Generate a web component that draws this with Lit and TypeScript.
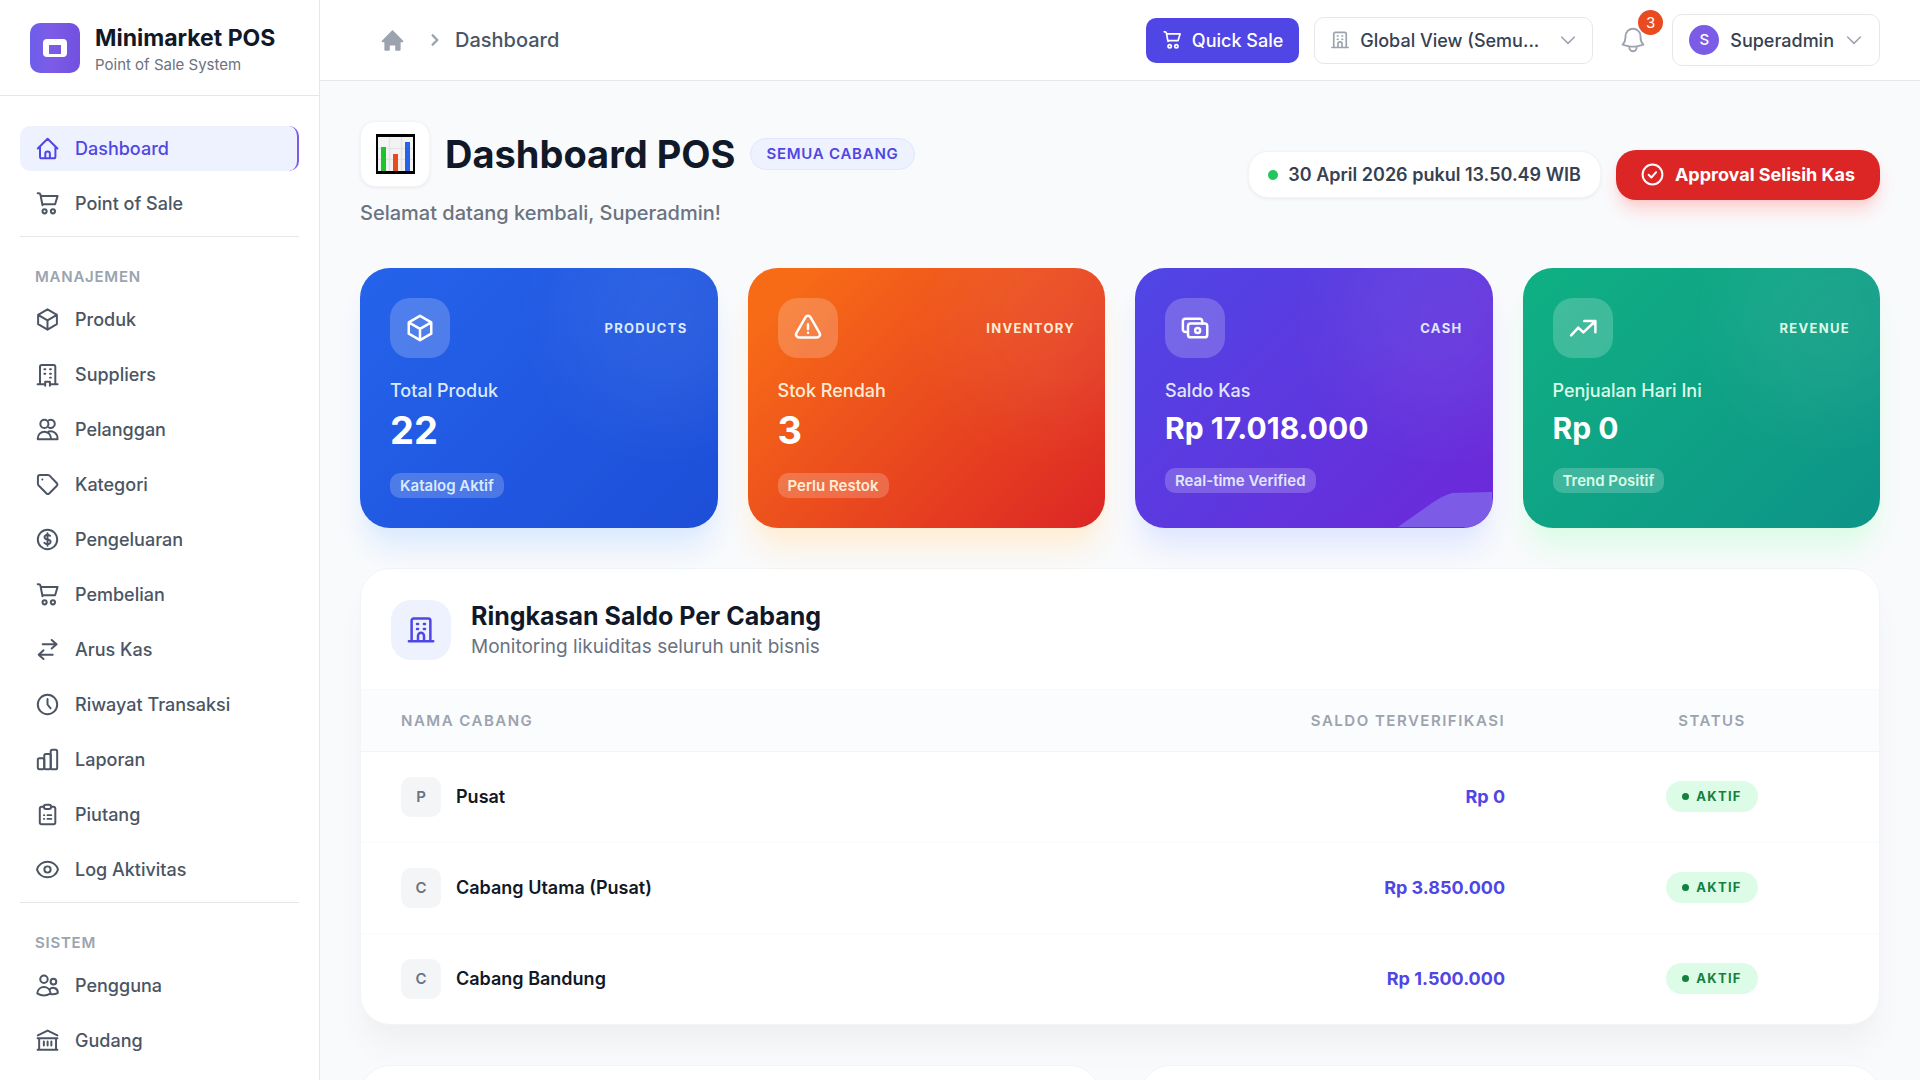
import { LitElement, html, svg, css, type SVGTemplateResult } from "lit";
import { customElement } from "lit/decorators.js";
import { classMap } from "lit/directives/class-map.js";

const shapes: Record<string, SVGTemplateResult> = {
  home: svg`<path d="M2.7 12 12.1 2.7 21.5 12M4.8 10.4v9.4c0 .9.6 1.5 1.5 1.5h11.8c.9 0 1.5-.6 1.5-1.5v-9.4M9.9 21v-3.9a2.2 2.2 0 0 1 4.4 0V21"/>`,
  cart: svg`<path d="M2.6 2.2h1.1c.8 0 1.3.4 1.5 1.2l2 10.3M5.4 4.7h16.3l-2.4 8H7"/><circle cx="9.2" cy="19.5" r="2"/><circle cx="17.2" cy="19.5" r="2"/>`,
  box: svg`<path d="m21 7.5-9-5.25L3 7.5m18 0-9 5.25m9-5.25v9l-9 5.25M3 7.5l9 5.25M3 7.5v9l9 5.25m0-9v9"/>`,
  supplier: svg`<path d="M4.8 21.3V4.6c0-1 .7-1.7 1.7-1.7h11.3c1 0 1.7.7 1.7 1.7v16.7M2.5 21.4h7.3v-2.5h4.5v2.5h7.4M9.8 21v1.8M14.3 21v1.8M9 7h.9M14.4 7h.9M9 11.2h.9M14.4 11.2h.9M14.4 15h.9"/>`,
  people: svg`<circle cx="9" cy="6.6" r="3.9"/><path d="M13.4 3.1a3.9 3.9 0 1 1 0 7M2.7 21.4v-1a6.3 6.3 0 0 1 12.6 0v1zM13.2 13.9c4.6-.9 8.4 1.8 8.4 6.5v1h-6"/>`,
  tag: svg`<path d="M5 2.8h7.3c.7 0 1.2.2 1.7.7l7 7.3c.7.8.7 1.7 0 2.4l-7.4 7.4c-.8.7-1.7.7-2.5 0l-7.6-7.6a2.4 2.4 0 0 1-.7-1.7V5c0-1.3.9-2.2 2.2-2.2z"/><path d="M7 7.2h.1"/>`,
  dollar: svg`<path d="M12 6v12m-3-2.818.879.659c1.171.879 3.070.879 4.242 0 1.172-.879 1.172-2.303 0-3.182C13.536 12.219 12.768 12 12 12c-.725 0-1.450-.220-2.003-.659-1.106-.879-1.106-2.303 0-3.182s2.900-.879 4.006 0l.415.330"/><circle cx="12" cy="12" r="9.3"/>`,
  swap: svg`<path d="M7.4 7h13.2M16 2.9 20.7 7 16 11.1M17 17H3.6M8.2 12.8 3.5 17l4.7 4.1"/>`,
  clock: svg`<circle cx="12" cy="12" r="9.3"/><path d="M12 6.8V12l3 3.7"/>`,
  bars: svg`<rect x="2.7" y="10.7" width="6.2" height="10.6" rx="1.5"/><rect x="8.9" y="6.7" width="6.2" height="14.6" rx="1.5"/><rect x="15.1" y="2.7" width="6.2" height="18.6" rx="1.5"/>`,
  clipboard: svg`<path d="M8.6 4.5H6.3c-1 0-1.7.7-1.7 1.7v13.5c0 1 .7 1.7 1.7 1.7h11.5c1 0 1.7-.7 1.7-1.7V6.2c0-1-.7-1.7-1.7-1.7h-2.4"/><rect x="8.6" y="2.7" width="6.8" height="4" rx="1.8"/><path d="M8.6 12.6h.2M12 12.6h3.6M8.6 16.2h.2M12 16.2h3.6"/>`,
  eye: svg`<path d="M2.036 12.322a1.012 1.012 0 0 1 0-.639C3.423 7.510 7.360 4.500 12 4.500c4.638 0 8.573 3.007 9.963 7.178.070.207.070.431 0 .639C20.577 16.490 16.640 19.500 12 19.500c-4.638 0-8.573-3.007-9.963-7.178Z"/><circle cx="12" cy="12" r="3"/>`,
  team: svg`<circle cx="8.6" cy="6" r="3.6"/><circle cx="17.7" cy="8.3" r="2.7"/><path d="M2.2 19.2a6.4 6.6 0 0 1 12.7 0c0 .5 0 .6-.2.7-3.9 2.2-8.5 2.2-12.3 0-.2-.1-.2-.3-.2-.7zM14.9 20.2c2.5.5 4.7.1 6.9-.9a4.4 4.4 0 0 0-7.7-3.5"/>`,
  library: svg`<path d="M2.7 7.1 12.1 2.5l9.4 4.6M2.5 9.8h19M4 9.8v10.7M20.2 9.8v10.7M2.5 20.8h19M8.5 13v3.8M12.1 13v3.8M15.7 13v3.8"/>`,
  building: svg`<path d="M2.3 21h19.5M4.5 21V4.5c0-1 .7-1.7 1.7-1.7h11.6c1 0 1.7.7 1.7 1.7V21M9.6 21v-4.4a2.4 2.4 0 0 1 4.8 0V21M8.8 7.2h.9M14.3 7.2h.9M8.8 11.2h.9M14.3 11.2h.9"/>`,
  bell: svg`<path d="M14.857 17.082a23.848 23.848 0 0 0 5.454-1.310A8.967 8.967 0 0 1 18 9.750V9A6 6 0 0 0 6 9v.750a8.967 8.967 0 0 1-2.312 6.022c1.733.640 3.560 1.085 5.455 1.310m5.714 0a24.255 24.255 0 0 1-5.714 0m5.714 0a3 3 0 1 1-5.714 0"/>`,
  down: svg`<path d="m3.5 8 8.5 8.5L20.5 8"/>`,
  right: svg`<path d="m8 4 8 8-8 8"/>`,
  check: svg`<circle cx="12" cy="12" r="9.5"/><path d="m8.3 12.2 2.6 2.7 4.6-5.1"/>`,
  warning: svg`<path d="M12 9v3.750m-9.303 3.376c-.866 1.500.217 3.374 1.948 3.374h14.710c1.730 0 2.813-1.874 1.948-3.374L13.949 3.378c-.866-1.500-3.032-1.500-3.898 0L2.697 16.126ZM12 15.750h.007v.008H12v-.008Z"/>`,
  cash: svg`<path d="M6.4 15.2H4.4c-1.200 0-2.100-.9-2.100-2.100V6.700c0-1.200.9-2.100 2.100-2.100h11.300c1.200 0 2.100.9 2.100 2.100v1.600"/><rect x="6.4" y="8.4" width="15.4" height="11" rx="2.1"/><circle cx="14.1" cy="13.9" r="2"/>`,
  trend: svg`<path d="m2.5 17.9 5.700-6.200 4.100 3.800 9.200-8.700M13 6.400h8.900v9"/>`,
};

const icon = (name: string, extra = "") =>
  html`<svg class="icon ${extra}" viewBox="0 0 24 24" aria-hidden="true">${shapes[name]}</svg>`;

interface NavItem { label: string; icon: string; active?: boolean }
const navGroups: { title?: string; items: NavItem[] }[] = [
  { items: [
    { label: "Dashboard", icon: "home", active: true },
    { label: "Point of Sale", icon: "cart" },
  ] },
  { title: "MANAJEMEN", items: [
    { label: "Produk", icon: "box" },
    { label: "Suppliers", icon: "supplier" },
    { label: "Pelanggan", icon: "people" },
    { label: "Kategori", icon: "tag" },
    { label: "Pengeluaran", icon: "dollar" },
    { label: "Pembelian", icon: "cart" },
    { label: "Arus Kas", icon: "swap" },
    { label: "Riwayat Transaksi", icon: "clock" },
    { label: "Laporan", icon: "bars" },
    { label: "Piutang", icon: "clipboard" },
    { label: "Log Aktivitas", icon: "eye" },
  ] },
  { title: "SISTEM", items: [
    { label: "Pengguna", icon: "team" },
    { label: "Gudang", icon: "library" },
  ] },
];

const stats = [
  { tone: "blue", icon: "box", tag: "PRODUCTS", label: "Total Produk", value: "22", note: "Katalog Aktif", money: false },
  { tone: "orange", icon: "warning", tag: "INVENTORY", label: "Stok Rendah", value: "3", note: "Perlu Restok", money: false },
  { tone: "violet", icon: "cash", tag: "CASH", label: "Saldo Kas", value: "Rp 17.018.000", note: "Real-time Verified", money: true },
  { tone: "green", icon: "trend", tag: "REVENUE", label: "Penjualan Hari Ini", value: "Rp 0", note: "Trend Positif", money: true },
];

const branches = [
  { name: "Pusat", balance: "Rp 0" },
  { name: "Cabang Utama (Pusat)", balance: "Rp 3.850.000" },
  { name: "Cabang Bandung", balance: "Rp 1.500.000" },
];

@customElement("app-sidebar")
export class AppSidebar extends LitElement {
  static styles = css`
    :host { display: block; box-sizing: border-box; width: 320px; flex: none; background: #fff; border-right: 1px solid #e5e7eb; }
    .brand { display: flex; align-items: center; gap: 15px; height: 95px; padding: 0 30px; border-bottom: 1px solid #e5e7eb; }
    .logo { width: 50px; height: 50px; border-radius: 10px; background: linear-gradient(90deg, #6d5eea, #7c5ce7 40%, #7350e0); display: grid; place-items: center; flex: none; }
    .logo-mark { width: 12px; height: 9px; border: 6px solid #fff; border-bottom-width: 3px; border-radius: 4px; }
    .brand-text { padding-top: 6px; }
    .name { margin: 0; font-size: 23px; line-height: 28px; font-weight: 700; color: #111827; white-space: nowrap; }
    .tagline { margin: 0; font-size: 15px; line-height: 25px; color: #6b7280; }
    nav { padding: 30px 20px; }
    .group + .group { border-top: 1px solid #e5e7eb; margin-top: 10px; }
    .title { margin: 0; padding: 30px 15px 10px; font-size: 15px; line-height: 20px; font-weight: 600; letter-spacing: 0.05em; color: #9ca3af; }
    ul { list-style: none; margin: 0; padding: 0; display: flex; flex-direction: column; gap: 10px; }
    a { box-sizing: border-box; display: flex; align-items: center; gap: 15px; height: 45px; padding: 0 15px; border-radius: 10px; color: #4b5563; font-size: 18px; font-weight: 500; text-decoration: none; }
    a.active { background: #eef2ff; color: #4f46e5; border-right: 2px solid #7c5ce7; }
    .icon { width: 25px; height: 25px; flex: none; fill: none; stroke: currentColor; stroke-width: 1.9; stroke-linecap: round; stroke-linejoin: round; }
  `;
  render() {
    return html`
      <div class="brand">
        <div class="logo"><div class="logo-mark"></div></div>
        <div class="brand-text">
          <p class="name">Minimarket POS</p>
          <p class="tagline">Point of Sale System</p>
        </div>
      </div>
      <nav aria-label="Menu">
        ${navGroups.map((g) => html`
          <div class="group">
            ${g.title ? html`<h2 class="title">${g.title}</h2>` : ""}
            <ul>
              ${g.items.map((i) => html`<li><a href="#" class=${classMap({ active: !!i.active })}>${icon(i.icon)}${i.label}</a></li>`)}
            </ul>
          </div>`)}
      </nav>`;
  }
}

@customElement("app-topbar")
export class AppTopbar extends LitElement {
  static styles = css`
    :host { display: flex; align-items: center; justify-content: space-between; box-sizing: border-box; height: 81px; flex: none; padding: 0 40px 0 60px; background: #fff; border-bottom: 1px solid #e5e7eb; }
    .crumbs, .actions { display: flex; align-items: center; }
    .home { display: flex; color: #9ca3af; }
    .home svg { width: 25px; height: 25px; fill: currentColor; }
    .here { font-size: 20px; font-weight: 500; color: #4b5563; }
    .icon { fill: none; stroke: currentColor; stroke-width: 1.5; stroke-linecap: round; stroke-linejoin: round; flex: none; }
    .sep { width: 14px; height: 14px; margin: 0 13px 0 23px; color: #9ca3af; }
    .sep.icon { stroke-width: 4; }
    button, select { font: inherit; color: inherit; cursor: pointer; }
    .quick { display: flex; align-items: center; gap: 10px; height: 45px; padding: 0 16px; border: 0; border-radius: 10px; background: #4f46e5; color: #fff; font-size: 18px; font-weight: 500; }
    .s20 { width: 20px; height: 20px; stroke-width: 2; }
    .branch { display: flex; align-items: center; gap: 10px; box-sizing: border-box; width: 279px; height: 47px; margin-left: 15px; padding: 0 15px; border: 1px solid #e5e7eb; border-radius: 10px; color: #9ca3af; }
    .branch select { appearance: none; flex: 1; min-width: 0; border: 0; padding: 0; background: none; color: #374151; font-size: 18px; font-weight: 500; outline: none; }
    .arrow { width: 18px; height: 18px; color: #9ca3af; stroke-width: 2; }
    .bell { position: relative; display: grid; place-items: center; width: 52px; height: 52px; margin: 0 13px 0 14px; padding: 0; border: 0; background: none; color: #9ca3af; }
    .bell .icon { width: 30px; height: 30px; }
    .count { position: absolute; top: -4px; right: -4px; width: 25px; height: 25px; border-radius: 50%; background: #ea4a20; color: #fff; font-size: 15px; line-height: 25px; text-align: center; }
    .user { display: flex; align-items: center; gap: 11px; height: 52px; padding: 0 16px; border: 1px solid #e5e7eb; border-radius: 10px; background: #fff; color: #374151; font-size: 18px; font-weight: 500; }
    .avatar { width: 30px; height: 30px; border-radius: 50%; background: #7c5ce7; color: #fff; font-size: 15px; line-height: 30px; text-align: center; }
  `;
  render() {
    return html`
      <div class="crumbs">
        <a class="home" href="#" aria-label="Beranda">
          <svg viewBox="0 0 24 24" aria-hidden="true"><path d="M12 1.800 1.800 12.300c-.5.6-.2 1.300.6 1.300h1.800v7c0 .7.5 1.200 1.200 1.200h3.200c.5 0 .8-.3.8-.8v-4.300h5.200V21c0 .5.300.8.8.8h3.200c.7 0 1.200-.5 1.200-1.200v-7h1.800c.8 0 1.100-.7.6-1.300z"/></svg>
        </a>
        ${icon("right", "sep")}
        <span class="here">Dashboard</span>
      </div>
      <div class="actions">
        <button class="quick">${icon("cart", "s20")}Quick Sale</button>
        <div class="branch">
          ${icon("building", "s20")}
          <select aria-label="Cabang"><option>Global View (Semu...</option></select>
          ${icon("down", "arrow")}
        </div>
        <button class="bell" aria-label="Notifikasi">${icon("bell")}<span class="count">3</span></button>
        <button class="user"><span class="avatar">S</span>Superadmin${icon("down", "arrow")}</button>
      </div>`;
  }
}

@customElement("stat-card")
export class StatCard extends LitElement {
  static properties = { data: { attribute: false } };
  declare data: (typeof stats)[number];
  static styles = css`
    :host { display: block; min-width: 0; }
    .card { position: relative; box-sizing: border-box; height: 260px; padding: 30px; border-radius: 30px; color: #fff; display: flex; flex-direction: column; align-items: flex-start; }
    .decor { position: absolute; inset: 0; border-radius: inherit; overflow: hidden; pointer-events: none; }
    .glow { position: absolute; top: -50px; right: -50px; width: 200px; height: 200px; border-radius: 50%; background: rgba(255, 255, 255, 0.06); filter: blur(40px); }
    .wave { position: absolute; right: 1px; bottom: 1px; width: 94px; height: 35px; fill: #7c5ce7; }
    .blue { background: linear-gradient(135deg, #2563eb, #1d4ed8); box-shadow: 0 25px 31px -6px #dbeafe, 0 10px 13px -8px #dbeafe; --soft: #dbeafe; }
    .orange { background: linear-gradient(135deg, #f76b17 10%, #dc2626); box-shadow: 0 25px 31px -6px #ffedd5, 0 10px 13px -8px #ffedd5; --soft: #ffedd5; }
    .violet { background: linear-gradient(135deg, #4f46e5, #6d28d9); box-shadow: 0 25px 31px -6px #e0e7ff, 0 10px 13px -8px #e0e7ff; --soft: #e0e7ff; }
    .green { background: linear-gradient(135deg, #10b083, #0d9488); box-shadow: 0 25px 31px -6px #dcfce7, 0 10px 13px -8px #dcfce7; --soft: #dcfce7; }
    .top { position: relative; align-self: stretch; display: flex; align-items: center; justify-content: space-between; margin-bottom: 20px; }
    .tile { width: 60px; height: 60px; border-radius: 20px; background: rgba(255, 255, 255, 0.2); display: grid; place-items: center; }
    .icon { width: 30px; height: 30px; fill: none; stroke: #fff; stroke-width: 2; stroke-linecap: round; stroke-linejoin: round; }
    .tag { font-size: 13px; font-weight: 700; letter-spacing: 0.1em; color: var(--soft); }
    .label { position: relative; margin: 0 0 5px; font-size: 18px; line-height: 25px; color: var(--soft); font-weight: 500; }
    .value { position: relative; margin: 0 0 20px; font-size: 38px; line-height: 45px; font-weight: 700; }
    .value.money { font-size: 30px; line-height: 40px; }
    .note { position: relative; padding: 0 10px; border-radius: 10px; background: rgba(255, 255, 255, 0.2); font-size: 15px; line-height: 25px; font-weight: 600; color: var(--soft); }
  `;
  render() {
    const d = this.data;
    return html`
      <article class="card ${d.tone}">
        <div class="decor">
          <div class="glow"></div>
          ${d.tone === "violet" ? html`<svg class="wave" viewBox="0 0 94 35" aria-hidden="true"><path d="M0 35 34 11Q46 3 54 1L94 0V35z"/></svg>` : ""}
        </div>
        <div class="top"><div class="tile">${icon(d.icon)}</div><span class="tag">${d.tag}</span></div>
        <p class="label">${d.label}</p>
        <p class="value ${classMap({ money: d.money })}">${d.value}</p>
        <span class="note">${d.note}</span>
      </article>`;
  }
}

@customElement("branch-table")
export class BranchTable extends LitElement {
  static styles = css`
    :host { display: block; }
    .card { background: #fff; border: 1px solid #f3f4f6; border-radius: 30px; overflow: hidden; box-shadow: 0 25px 31px -6px #eff0f2, 0 10px 13px -8px #eff0f2; }
    .head { display: flex; align-items: center; gap: 20px; padding: 30px 30px 28px; border-bottom: 1px solid #f9fafb; }
    .tile { width: 60px; height: 60px; border-radius: 20px; background: #eef2ff; display: grid; place-items: center; color: #4f46e5; }
    .icon { width: 30px; height: 30px; fill: none; stroke: currentColor; stroke-width: 2; stroke-linecap: round; stroke-linejoin: round; }
    h2 { margin: 0; font-size: 25px; line-height: 34px; font-weight: 700; color: #111827; }
    .sub { margin: 0; font-size: 19px; line-height: 28px; color: #6b7280; }
    table { width: 100%; border-collapse: collapse; }
    th { height: 61px; padding: 0 40px; box-sizing: border-box; background: #fbfcfd; border-bottom: 1px solid #f3f4f6; font-size: 15px; font-weight: 600; letter-spacing: 0.1em; color: #9ca3af; text-align: left; }
    td { height: 90px; padding: 0 40px; border-bottom: 1px solid #f9fafb; font-size: 18px; }
    tr:last-child td { border-bottom: 0; }
    .status { width: 22%; box-sizing: border-box; text-align: center; }
    .amount { text-align: right; }
    td.amount { font-weight: 700; color: #4f46e5; }
    .name { display: flex; align-items: center; gap: 15px; font-weight: 600; color: #111827; }
    .initial { width: 40px; height: 40px; border-radius: 10px; background: #f4f5f6; color: #6b7280; font-size: 15px; line-height: 40px; text-align: center; }
    .pill { display: inline-flex; align-items: center; gap: 7px; padding: 0 16px; border-radius: 16px; background: #dcfce7; color: #15803d; font-size: 13px; line-height: 31px; font-weight: 700; letter-spacing: 0.1em; vertical-align: middle; }
    .dot { width: 7px; height: 7px; border-radius: 50%; background: #15803d; }
  `;
  render() {
    return html`
      <section class="card">
        <div class="head">
          <div class="tile">${icon("building")}</div>
          <div><h2>Ringkasan Saldo Per Cabang</h2><p class="sub">Monitoring likuiditas seluruh unit bisnis</p></div>
        </div>
        <table>
          <thead><tr><th scope="col">NAMA CABANG</th><th scope="col" class="amount">SALDO TERVERIFIKASI</th><th scope="col" class="status">STATUS</th></tr></thead>
          <tbody>
            ${branches.map((b) => html`
              <tr>
                <td><div class="name"><span class="initial">${b.name[0]}</span>${b.name}</div></td>
                <td class="amount">${b.balance}</td>
                <td class="status"><span class="pill"><span class="dot"></span>AKTIF</span></td>
              </tr>`)}
          </tbody>
        </table>
      </section>`;
  }
}

@customElement("app-root")
export class AppRoot extends LitElement {
  static styles = css`
    :host { display: flex; height: 100vh; overflow: hidden; background: #f9fafc; font-family: Inter, "Liberation Sans", sans-serif; color: #111827; }
    .page { flex: 1; min-width: 0; display: flex; flex-direction: column; }
    main { flex: 1; min-height: 0; overflow: hidden; padding: 40px; display: flex; flex-direction: column; gap: 40px; }
    main > * { flex: none; }
    .hero { display: flex; align-items: center; justify-content: space-between; }
    .heading { display: flex; align-items: center; gap: 15px; }
    .emoji { box-sizing: border-box; width: 70px; height: 66px; border: 1px solid #f3f4f6; border-radius: 15px; background: #fff; box-shadow: 0 1px 3px #e9eaee; display: grid; place-items: center; }
    .emoji svg { width: 39px; height: 40px; }
    h1 { margin: 0; font-size: 38px; line-height: 46px; font-weight: 700; color: #111827; }
    .scope { padding: 0 15px; border: 1px solid #e0e7ff; border-radius: 16px; background: #eef2ff; color: #4f46e5; font-size: 15px; line-height: 30px; font-weight: 600; letter-spacing: 0.05em; }
    .welcome { margin: 11px 0 0; font-size: 20px; line-height: 30px; font-weight: 500; color: #6b7280; }
    .side { display: flex; align-items: center; gap: 15px; }
    .clock { display: flex; align-items: center; gap: 10px; padding: 0 19px; border: 1px solid #f3f4f6; border-radius: 20px; background: #fff; box-shadow: 0 1px 3px #e9eaee; color: #374151; font-size: 18px; line-height: 45px; font-weight: 600; }
    .live { width: 10px; height: 10px; border-radius: 50%; background: #22c55e; }
    .approve { display: flex; align-items: center; gap: 10px; height: 50px; padding: 0 25px 0 24px; border: 0; border-radius: 20px; background: #dc2626; color: #fff; font: inherit; font-size: 18px; font-weight: 700; cursor: pointer; box-shadow: 0 12px 19px -4px #fecaca, 0 5px 8px -5px #fecaca; }
    .approve .icon { width: 25px; height: 25px; fill: none; stroke: #fff; stroke-width: 1.9; stroke-linecap: round; stroke-linejoin: round; }
    .stats { display: grid; grid-template-columns: repeat(4, minmax(0, 1fr)); gap: 30px; }
    .panels { display: grid; grid-template-columns: repeat(2, minmax(0, 1fr)); gap: 40px; }
    .panel { min-height: 300px; border: 1px solid #f3f4f6; border-radius: 30px; background: #fff; }
  `;
  render() {
    return html`
      <app-sidebar></app-sidebar>
      <div class="page">
        <app-topbar></app-topbar>
        <main>
          <header class="hero">
            <div>
              <div class="heading">
                <div class="emoji">
                  <svg viewBox="0 0 39 40" aria-hidden="true">
                    <rect width="39" height="40" fill="#000"/><rect x="2" y="3" width="35" height="34" fill="#f3f4f2"/>
                    <path d="M13.5 3v34M25.5 3v34M2 14.5h35M2 25.5h35" stroke="#e3e2ea" stroke-width="1.5"/>
                    <rect x="5" y="13" width="5" height="24" fill="#1cc42c"/><rect x="17" y="20" width="5" height="17" fill="#ea4a20"/><rect x="29" y="8" width="5" height="29" fill="#2563eb"/>
                  </svg>
                </div>
                <h1>Dashboard POS</h1>
                <span class="scope">SEMUA CABANG</span>
              </div>
              <p class="welcome">Selamat datang kembali, Superadmin!</p>
            </div>
            <div class="side">
              <div class="clock"><span class="live"></span>30 April 2026 pukul 13.50.49 WIB</div>
              <button class="approve">${icon("check")}Approval Selisih Kas</button>
            </div>
          </header>
          <section class="stats">${stats.map((s) => html`<stat-card .data=${s}></stat-card>`)}</section>
          <branch-table></branch-table>
          <section class="panels"><div class="panel"></div><div class="panel"></div></section>
        </main>
      </div>`;
  }
}
